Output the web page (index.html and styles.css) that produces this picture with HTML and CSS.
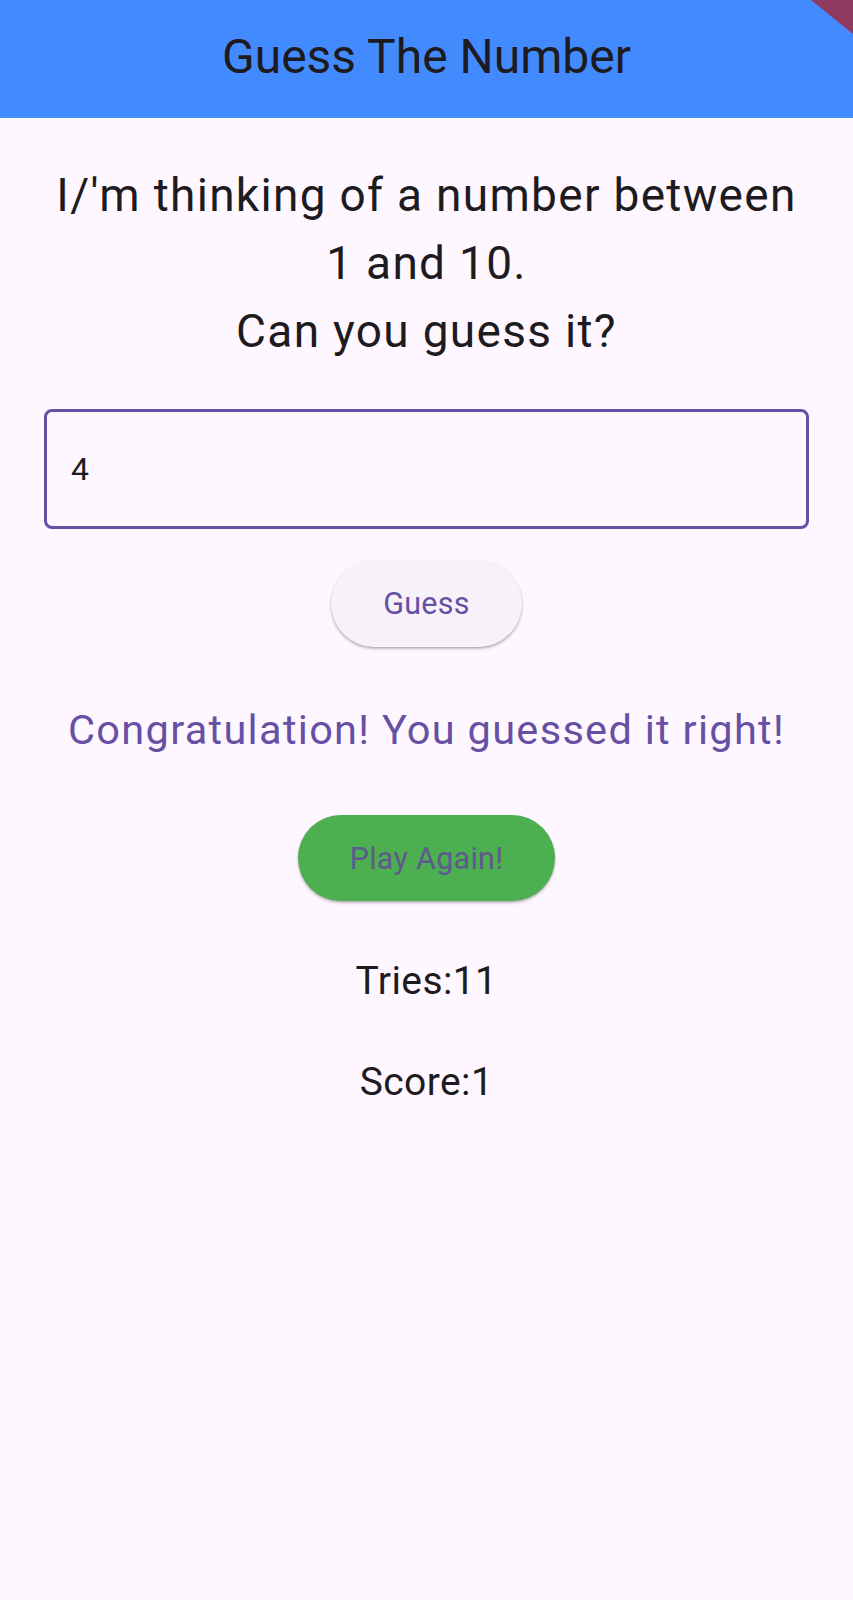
FILE: index.html
```html
<!DOCTYPE html>
<html lang="en">
<head>
<meta charset="utf-8">
<title>Guess The Number</title>
<link rel="stylesheet" href="styles.css">
</head>
<body>
<header class="appbar">
  <h1 class="appbar-title">Guess The Number</h1>
  <div class="debug-banner"></div>
</header>
<main class="content">
  <p class="prompt">I/'m thinking of a number between<br>1 and 10.<br>Can you guess it?</p>
  <div class="field"><span class="field-value">4</span></div>
  <button class="btn btn-guess" type="button">Guess</button>
  <p class="result">Congratulation! You guessed it right!</p>
  <button class="btn btn-again" type="button">Play Again!</button>
  <p class="stat stat-tries">Tries:11</p>
  <p class="stat stat-score">Score:1</p>
</main>
</body>
</html>
```

FILE: styles.css
```css
* { box-sizing: border-box; }

html, body {
  margin: 0;
  padding: 0;
  background: #fef7ff;
  font-family: Roboto, "Noto Sans", "Liberation Sans", sans-serif;
  color: #1d1b20;
}

body {
  min-height: 1600px;
  overflow: hidden;
}

.appbar {
  position: relative;
  height: 118px;
  background: #448aff;
  display: flex;
  align-items: center;
  justify-content: center;
  padding-bottom: 4px;
  overflow: hidden;
}

.appbar-title {
  margin: 0;
  font-size: 48px;
  font-weight: 400;
  color: #1d1b20;
  line-height: 1;
}

.debug-banner {
  position: absolute;
  top: 0;
  right: 0;
  width: 42px;
  height: 34px;
  background: #8f3a5e;
  clip-path: polygon(0 0, 100% 0, 100% 100%);
}

.content {
  display: flex;
  flex-direction: column;
  align-items: center;
  padding: 43px 44px 0;
}

.prompt {
  margin: 0;
  font-size: 46px;
  line-height: 68px;
  letter-spacing: 1.3px;
  text-align: center;
  color: #1d1b20;
}

.field {
  margin-top: 44px;
  width: 100%;
  height: 120px;
  border: 3px solid #6750a4;
  border-radius: 8px;
  display: flex;
  align-items: center;
  padding-left: 24px;
}

.field-value {
  font-size: 32px;
  color: #1d1b20;
}

.btn {
  border: none;
  border-radius: 999px;
  font-family: Roboto, "Noto Sans", "Liberation Sans", sans-serif;
  font-weight: 400;
  color: #6750a4;
  padding: 0;
  cursor: pointer;
}

.btn-guess {
  margin-top: 31px;
  width: 191px;
  height: 87px;
  background: #f7f2fa;
  font-size: 30.5px;
  letter-spacing: 0.26px;
  box-shadow: 0 2px 3px rgba(0, 0, 0, 0.22), 0 1px 2px rgba(0, 0, 0, 0.12);
}

.result {
  margin: 59px 0 0;
  font-size: 41.5px;
  line-height: 48px;
  letter-spacing: 1.3px;
  color: #6750a4;
  text-align: center;
}

.btn-again {
  margin-top: 61px;
  width: 257px;
  height: 86px;
  background: #4caf50;
  font-size: 30.5px;
  letter-spacing: 0.26px;
  color: #5f5a8e;
  box-shadow: 0 2px 3px rgba(0, 0, 0, 0.22), 0 1px 2px rgba(0, 0, 0, 0.12);
}

.stat {
  margin: 0;
  font-size: 39px;
  line-height: 46px;
  letter-spacing: 0.4px;
  color: #1d1b20;
}

.stat-tries { margin-top: 57px; }
.stat-score { margin-top: 55px; }
```
